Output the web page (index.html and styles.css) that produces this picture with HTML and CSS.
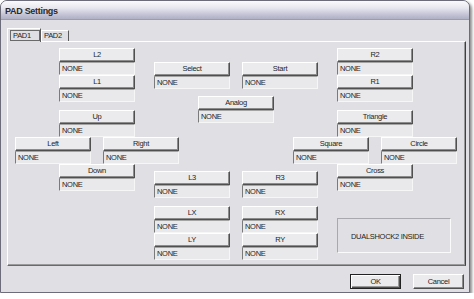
FILE: index.html
```html
<!DOCTYPE html>
<html>
<head>
  <meta name="viewport" content="width=device-width, initial-scale=1">
  <link rel="stylesheet" href="styles.css">
</head>
<body>

  <div class="window">
    <div class="titlebar">PAD Settings</div>
    <div class="client">

      <div class="tabs">
        <div class="tab tab-active"><span class="focus">PAD1</span></div>
        <div class="tab">PAD2</div>
      </div>

      <div class="panel">
        <!-- Left side: shoulder buttons and d-pad -->
        <div class="cluster">
          <div class="bind"><div class="bind-key">L2</div><div class="bind-value">NONE</div></div>
          <div class="bind"><div class="bind-key">L1</div><div class="bind-value">NONE</div></div>
          <div class="bind gap-s"><div class="bind-key">Up</div><div class="bind-value">NONE</div></div>
          <div class="pair">
            <div class="bind"><div class="bind-key">Left</div><div class="bind-value">NONE</div></div>
            <div class="bind"><div class="bind-key">Right</div><div class="bind-value">NONE</div></div>
          </div>
          <div class="bind"><div class="bind-key">Down</div><div class="bind-value">NONE</div></div>
        </div>

        <!-- Middle: system buttons and sticks -->
        <div class="cluster cluster-mid">
          <div class="pair">
            <div class="bind"><div class="bind-key">Select</div><div class="bind-value">NONE</div></div>
            <div class="bind"><div class="bind-key">Start</div><div class="bind-value">NONE</div></div>
          </div>
          <div class="bind analog"><div class="bind-key">Analog</div><div class="bind-value">NONE</div></div>
          <div class="pair sticks">
            <div class="bind"><div class="bind-key">L3</div><div class="bind-value">NONE</div></div>
            <div class="bind"><div class="bind-key">R3</div><div class="bind-value">NONE</div></div>
          </div>
          <div class="pair gap-s">
            <div class="bind"><div class="bind-key">LX</div><div class="bind-value">NONE</div></div>
            <div class="bind"><div class="bind-key">RX</div><div class="bind-value">NONE</div></div>
          </div>
          <div class="pair">
            <div class="bind"><div class="bind-key">LY</div><div class="bind-value">NONE</div></div>
            <div class="bind"><div class="bind-key">RY</div><div class="bind-value">NONE</div></div>
          </div>
        </div>

        <!-- Right side: shoulder buttons and face buttons -->
        <div class="cluster">
          <div class="bind"><div class="bind-key">R2</div><div class="bind-value">NONE</div></div>
          <div class="bind"><div class="bind-key">R1</div><div class="bind-value">NONE</div></div>
          <div class="bind gap-s"><div class="bind-key">Triangle</div><div class="bind-value">NONE</div></div>
          <div class="pair">
            <div class="bind"><div class="bind-key">Square</div><div class="bind-value">NONE</div></div>
            <div class="bind"><div class="bind-key">Circle</div><div class="bind-value">NONE</div></div>
          </div>
          <div class="bind"><div class="bind-key">Cross</div><div class="bind-value">NONE</div></div>
          <div class="pad-type">DUALSHOCK2 INSIDE</div>
        </div>
      </div>

      <div class="actions">
        <button class="btn btn-default">OK</button>
        <button class="btn">Cancel</button>
      </div>

    </div>
  </div>

</body>
</html>
```

FILE: styles.css
```css
/* Base styling */
body {
  margin: 0;
  background: #fff;
  font-family: "Liberation Sans", Arial, sans-serif;
  font-size: 7.5px;
  letter-spacing: -0.3px;
  color: #1e1e1e;
}
/* Dialog frame */
.window {
  width: 470px;
  height: 293px;
  box-sizing: border-box;
  border: 1px solid #6c6c7a;
  border-radius: 7px 7px 0 0;
  background: #e0e0e4;
  box-shadow: 2px 2px 3px rgba(0,0,0,0.45);
  overflow: hidden;
}
.titlebar {
  height: 19px;
  box-sizing: border-box;
  padding: 5px 0 0 4px;
  background: linear-gradient(#fbfbfd 0%, #e6e6ee 40%, #c4c4d6 75%, #b0b0c6 100%);
  border-bottom: 1px solid #9c9cb0;
  font-size: 9px;
  font-weight: bold;
  color: #2a2a2a;
}
.client {
  padding: 8px 3px 0 6px;
}
/* Tabs */
.tabs {
  display: flex;
  align-items: flex-end;
  height: 13px;
  position: relative;
  z-index: 1;
}
.tab {
  width: 28px;
  height: 11px;
  box-sizing: border-box;
  border: 1px solid;
  border-color: #fff #5a5a5a transparent #fff;
  border-bottom: 0;
  padding-left: 2px;
  line-height: 10px;
}
.tab-active {
  width: 34px;
  height: 14px;
  margin-bottom: -1px;
  padding: 1px 0 0 2px;
  background: #e0e0e4;
}
.tab-active .focus {
  display: block;
  width: 30px;
  height: 11px;
  box-sizing: border-box;
  border: 1px solid #6a6a6a;
  padding-left: 2px;
  line-height: 9px;
}
/* Tab page */
.panel {
  height: 225px;
  box-sizing: border-box;
  border: 1px solid;
  border-color: #fff #404040 #6a6a6a #fff;
  box-shadow: inset -1px -1px 0 #9a9a9a;
  padding: 6px 0 0 7px;
  display: flex;
  align-items: flex-start;
}
.cluster {
  width: 164px;
  display: flex;
  flex-direction: column;
  align-items: center;
}
.cluster + .cluster {
  margin-left: -25px;
}
.cluster-mid {
  padding-top: 14px;
}
.pair {
  display: flex;
  gap: 12px;
}
.gap-s {
  margin-top: 8px;
}
.analog {
  margin-top: 7px;
}
.sticks {
  margin-top: 48px;
}
/* One key binding: button on top, value below */
.bind {
  width: 76px;
}
.bind-key {
  height: 14px;
  box-sizing: border-box;
  border: 1px solid;
  border-color: #fff #505050 #505050 #fff;
  box-shadow: inset -1px -1px 0 #8c8c8c;
  background: #ebebed;
  text-align: center;
  line-height: 12px;
}
.bind-value {
  height: 13px;
  box-sizing: border-box;
  border: 1px solid;
  border-color: #a4a4a4 #f6f6f6 #f6f6f6 #7a7a7a;
  background: #e9e9eb;
  padding-left: 2px;
  line-height: 11px;
}
.pad-type {
  align-self: flex-start;
  margin: 27px 0 0 44px;
  width: 114px;
  height: 35px;
  box-sizing: border-box;
  border: 1px solid;
  border-color: #a8a8ae #fafafa #fafafa #a8a8ae;
  padding-left: 13px;
  line-height: 35px;
}
/* Dialog buttons */
.actions {
  display: flex;
  justify-content: flex-end;
  gap: 12px;
  margin-top: 8px;
  padding-right: 2px;
}
.btn {
  width: 51px;
  height: 15px;
  padding: 0;
  font: inherit;
  letter-spacing: inherit;
  color: inherit;
  background: #ebebed;
  border: 1px solid;
  border-color: #fff #505050 #505050 #fff;
  box-shadow: inset -1px -1px 0 #8c8c8c;
}
.btn-default {
  border-color: #222;
  box-shadow: inset 1px 1px 0 #fff, inset -1px -1px 0 #505050, inset -2px -2px 0 #9a9a9a;
}
```
